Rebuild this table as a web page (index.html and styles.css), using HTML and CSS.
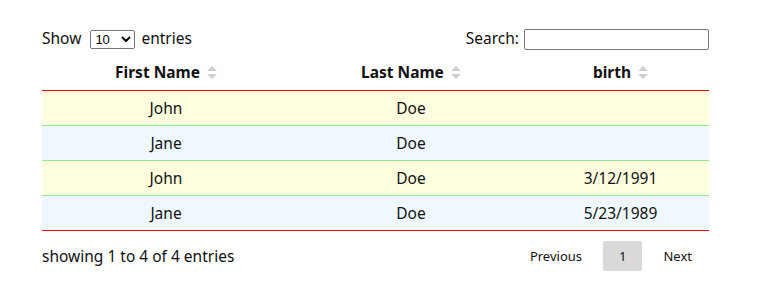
FILE: index.html
```html
<!DOCTYPE html>
<html lang="en">
<head>
    <meta charset="UTF-8">
    <title>People</title>
    <link rel="stylesheet" href="styles.css">
</head>
<body>
    <div class="wrapper">
        <div class="toolbar">
            <label class="length">Show
                <select>
                    <option>10</option>
                    <option>25</option>
                    <option>50</option>
                </select>
                entries
            </label>
            <label class="search">Search: <input type="search"></label>
        </div>

        <table class="people">
            <thead>
                <tr>
                    <th class="col-first">First Name <span class="sort"></span></th>
                    <th class="col-last">Last Name <span class="sort"></span></th>
                    <th class="col-birth">birth <span class="sort"></span></th>
                </tr>
            </thead>
            <tbody>
                <tr class="odd"><td>John</td><td>Doe</td><td></td></tr>
                <tr class="even"><td>Jane</td><td>Doe</td><td></td></tr>
                <tr class="odd"><td>John</td><td>Doe</td><td>3/12/1991</td></tr>
                <tr class="even"><td>Jane</td><td>Doe</td><td>5/23/1989</td></tr>
            </tbody>
        </table>

        <div class="footer">
            <div class="info">showing 1 to 4 of 4 entries</div>
            <div class="paging">
                <a class="page-btn">Previous</a>
                <a class="page-btn current">1</a>
                <a class="page-btn">Next</a>
            </div>
        </div>
    </div>
</body>
</html>
```

FILE: styles.css
```css
body {
    margin: 0;
    font-family: "Noto Sans", sans-serif;
    font-size: 15.5px;
    color: #111;
}

.wrapper {
    padding: 26px 48px 0 42px;
}

.toolbar {
    display: flex;
    justify-content: space-between;
    align-items: center;
    height: 24px;
}
.length select {
    font-family: "Liberation Sans", sans-serif;
    font-size: 13px;
    width: 45px;
    height: 19px;
    margin: 0 2px 0 5px;
}
.search input {
    width: 185px;
    height: 21px;
    box-sizing: border-box;
    border: 1px solid #767676;
    border-radius: 2px;
    margin-left: 1px;
}

.people {
    width: 100%;
    border-collapse: separate;
    border-spacing: 0;
    margin-top: 4px;
}
.people th {
    height: 36px;
    text-align: center;
    font-weight: bold;
    padding: 0;
    border-bottom: 1px solid red;
}
.col-first { width: 248px; }
.col-last { width: 242px; }
.people td {
    height: 34px;
    padding: 0;
    text-align: center;
    border-top: 1px solid #90ee90;
}
.people tbody tr:first-child td {
    border-top: none;
}
.people tbody tr:last-child td {
    border-bottom: 1px solid red;
}
.odd { background: #ffffe0; }
.even { background: #f0f8ff; }

/* up/down arrows next to column titles */
.sort {
    display: inline-block;
    width: 10px;
    height: 13px;
    margin-left: 3px;
    vertical-align: -1px;
    position: relative;
}
.sort::before,
.sort::after {
    content: "";
    position: absolute;
    left: 0;
    border-left: 5px solid transparent;
    border-right: 5px solid transparent;
}
.sort::before {
    top: 0;
    border-bottom: 5px solid #cfcfcf;
}
.sort::after {
    bottom: 0;
    border-top: 5px solid #cfcfcf;
}

.footer {
    display: flex;
    justify-content: space-between;
    align-items: center;
    margin-top: 10px;
}
.paging {
    display: flex;
    margin-right: 3px;
}
.page-btn {
    font-size: 13px;
    padding: 0 14px;
    line-height: 30px;
    border-radius: 2px;
    margin-left: 7px;
}
.page-btn.current {
    background: #d9d9d9;
    padding: 0 16px;
}
```
